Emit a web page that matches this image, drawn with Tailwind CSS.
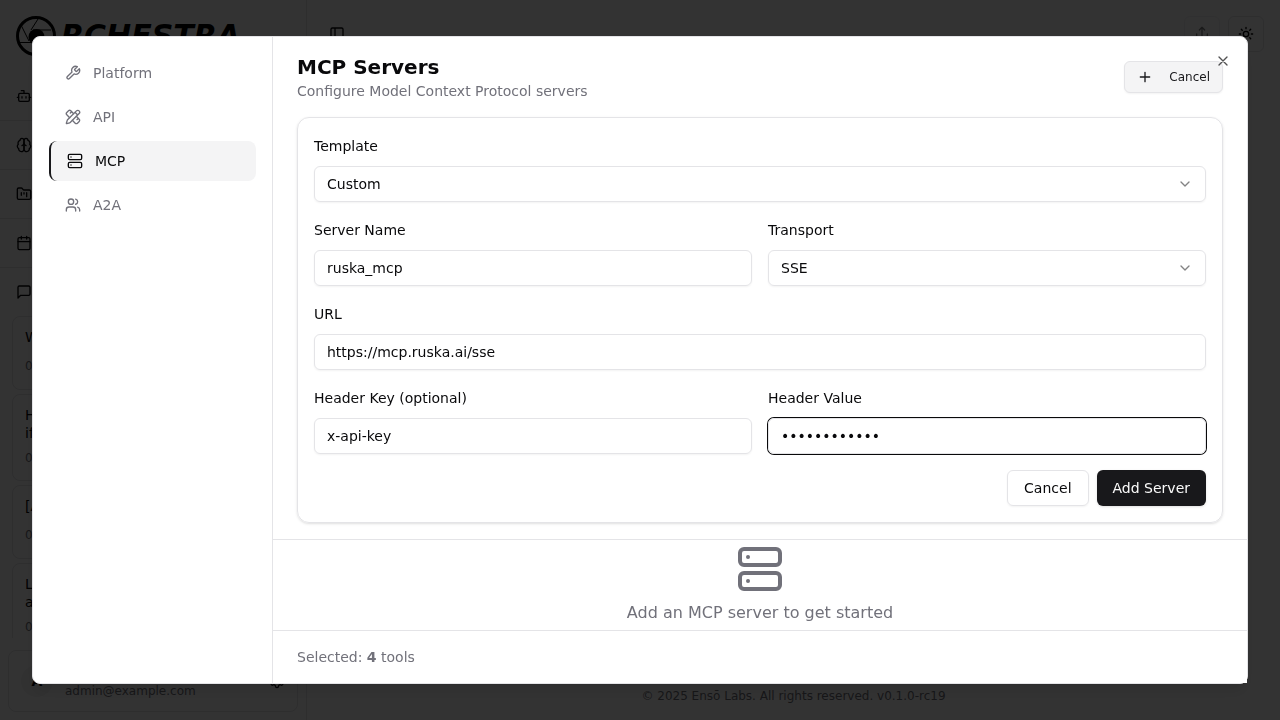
<!DOCTYPE html>
<html lang="en">
<head>
  <meta charset="UTF-8">
  <meta name="viewport" content="width=device-width, initial-scale=1.0">
  <title>Orchestra</title>
  <script src="https://cdn.jsdelivr.net/npm/@tailwindcss/browser@4"></script>
</head>
<body class="h-screen overflow-hidden bg-white font-['DejaVu_Sans',sans-serif] text-[#09090b]">

  <!-- App -->
  <div class="flex h-screen">
    <aside class="flex w-[307px] shrink-0 flex-col border-r border-[#e4e4e7]">
      <div class="flex h-18 shrink-0 items-center gap-[5px] pl-4">
        <svg class="size-10" viewBox="0 0 40 40" fill="none" stroke="black">
          <circle cx="20" cy="20" r="18.5" stroke-width="3"/>
          <path d="M22 3 15 14M17 14h18M5 9l8 16M4 26.500h18M29 33l-8-13" stroke-width="1"/>
          <circle cx="20.500" cy="21" r="8" fill="black" stroke="none"/>
        </svg>
        <span class="text-3xl font-bold italic text-black">RCHESTRA</span>
      </div>
      <nav class="shrink-0">
        <div class="flex h-[49px] items-center border-b border-[#e4e4e7] px-4">
          <svg class="size-4" viewBox="0 0 24 24" fill="none" stroke="currentColor" stroke-width="2" stroke-linecap="round" stroke-linejoin="round"><path d="M12 8V4H8"/><rect width="16" height="12" x="4" y="8" rx="2"/><path d="M2 14h2M20 14h2M15 13v2M9 13v2"/></svg>
        </div>
        <div class="flex h-[49px] items-center border-b border-[#e4e4e7] px-4">
          <svg class="size-4" viewBox="0 0 24 24" fill="none" stroke="currentColor" stroke-width="2" stroke-linecap="round" stroke-linejoin="round"><path d="M12 5a3 3 0 1 0-5.997.125 4 4 0 0 0-2.526 5.770 4 4 0 0 0 .556 6.588A4 4 0 1 0 12 18Z"/><path d="M12 5a3 3 0 1 1 5.997.125 4 4 0 0 1 2.526 5.770 4 4 0 0 1-.556 6.588A4 4 0 1 1 12 18Z"/><path d="M15 13a4.500 4.500 0 0 1-3-4 4.500 4.500 0 0 1-3 4"/></svg>
        </div>
        <div class="flex h-[49px] items-center border-b border-[#e4e4e7] px-4">
          <svg class="size-4" viewBox="0 0 24 24" fill="none" stroke="currentColor" stroke-width="2" stroke-linecap="round" stroke-linejoin="round"><path d="M4 20h16a2 2 0 0 0 2-2V8a2 2 0 0 0-2-2h-7.930a2 2 0 0 1-1.660-.9l-.820-1.200A2 2 0 0 0 7.930 3H4a2 2 0 0 0-2 2v13c0 1.100.9 2 2 2Z"/><path d="M8 10v4M12 10v2M16 10v6"/></svg>
        </div>
        <div class="flex h-[49px] items-center border-b border-[#e4e4e7] px-4">
          <svg class="size-4" viewBox="0 0 24 24" fill="none" stroke="currentColor" stroke-width="2" stroke-linecap="round" stroke-linejoin="round"><path d="M8 2v4M16 2v4"/><rect width="18" height="18" x="3" y="4" rx="2"/><path d="M3 10h18"/></svg>
        </div>
        <div class="flex h-12 items-center px-4">
          <svg class="size-4" viewBox="0 0 24 24" fill="none" stroke="currentColor" stroke-width="2" stroke-linecap="round" stroke-linejoin="round"><path d="M21 15a2 2 0 0 1-2 2H7l-4 4V5a2 2 0 0 1 2-2h14a2 2 0 0 1 2 2z"/></svg>
        </div>
      </nav>
      <div class="flex min-h-0 flex-1 flex-col gap-1 overflow-hidden px-3 text-sm leading-[18px]">
        <div class="h-[74px] shrink-0 rounded-lg border border-[#e4e4e7] px-3 pt-[11px]">
          <p>What tools do you have</p>
          <p class="mt-3 text-xs text-[#71717a]">08/14/2025</p>
        </div>
        <div class="h-[87px] shrink-0 rounded-lg border border-[#e4e4e7] px-3 pt-[11px]">
          <p>How can I check</p>
          <p>if a server is up</p>
          <p class="mt-2 text-xs text-[#71717a]">08/14/2025</p>
        </div>
        <div class="h-[74px] shrink-0 rounded-lg border border-[#e4e4e7] px-3 pt-[11px]">
          <p>[Agent] Daily report</p>
          <p class="mt-3 text-xs text-[#71717a]">08/13/2025</p>
        </div>
        <div class="h-[87px] shrink-0 rounded-lg border border-[#e4e4e7] px-3 pt-[11px]">
          <p>List all of the</p>
          <p>available tools</p>
          <p class="mt-2 text-xs text-[#71717a]">08/13/2025</p>
        </div>
      </div>
      <div class="mx-2 mt-3 mb-2 flex h-[62px] shrink-0 items-center rounded-lg border border-[#e4e4e7] px-3">
        <div class="flex size-8 items-center justify-center rounded-full bg-[#f4f4f5] text-sm font-bold">A</div>
        <div class="ml-3 flex-1 text-xs leading-5">
          <p class="font-bold">admin</p>
          <p class="text-[#71717a]">admin@example.com</p>
        </div>
        <svg class="size-4" viewBox="0 0 24 24" fill="none" stroke="currentColor" stroke-width="2"><path d="M12.220 2h-.440a2 2 0 0 0-2 2v.180a2 2 0 0 1-1 1.730l-.430.250a2 2 0 0 1-2 0l-.150-.080a2 2 0 0 0-2.730.730l-.220.380a2 2 0 0 0 .730 2.730l.150.100a2 2 0 0 1 1 1.720v.510a2 2 0 0 1-1 1.740l-.150.090a2 2 0 0 0-.730 2.730l.220.380a2 2 0 0 0 2.730.730l.150-.080a2 2 0 0 1 2 0l.430.250a2 2 0 0 1 1 1.730V20a2 2 0 0 0 2 2h.440a2 2 0 0 0 2-2v-.180a2 2 0 0 1 1-1.730l.430-.250a2 2 0 0 1 2 0l.150.080a2 2 0 0 0 2.730-.730l.220-.390a2 2 0 0 0-.730-2.730l-.150-.080a2 2 0 0 1-1-1.740v-.500a2 2 0 0 1 1-1.740l.150-.090a2 2 0 0 0 .730-2.730l-.220-.380a2 2 0 0 0-2.730-.730l-.150.080a2 2 0 0 1-2 0l-.430-.250a2 2 0 0 1-1-1.730V4a2 2 0 0 0-2-2z"/><circle cx="12" cy="12" r="3"/></svg>
      </div>
    </aside>
    <main class="flex flex-1 flex-col justify-between">
      <header class="flex h-[68px] items-center px-4">
        <div class="flex size-7 items-center justify-center">
          <svg class="size-4" viewBox="0 0 24 24" fill="none" stroke="currentColor" stroke-width="2"><rect width="18" height="18" x="3" y="3" rx="2"/><path d="M9 3v18"/></svg>
        </div>
        <div class="ml-auto flex gap-2">
          <button class="flex size-9 items-center justify-center rounded-md border border-[#e4e4e7] opacity-50">
            <svg class="size-4" viewBox="0 0 24 24" fill="none" stroke="currentColor" stroke-width="2" stroke-linecap="round" stroke-linejoin="round"><path d="M4 12v8a2 2 0 0 0 2 2h12a2 2 0 0 0 2-2v-8M16 6l-4-4-4 4M12 2v13"/></svg>
          </button>
          <button class="flex size-9 items-center justify-center rounded-md border border-[#e4e4e7]">
            <svg class="size-4" viewBox="0 0 24 24" fill="none" stroke="black" stroke-width="2" stroke-linecap="round" stroke-linejoin="round"><circle cx="12" cy="12" r="4"/><path d="M12 2v2M12 20v2m-7.070-17.070 1.410 1.410m11.320 11.320 1.410 1.410M2 12h2M20 12h2M6.340 17.660l-1.410 1.410M19.070 4.930l-1.410 1.410"/></svg>
          </button>
        </div>
      </header>
      <footer class="pb-4 text-center text-xs text-[#71717a]">© 2025 Ensō Labs. All rights reserved. v0.1.0-rc19</footer>
    </main>
  </div>

  <!-- Settings dialog -->
  <div class="fixed inset-0 z-50 flex items-center justify-center bg-black/80">
    <div class="relative flex h-[648px] w-[1216px] rounded-lg border border-[#e4e4e7] bg-white shadow-lg">
      <nav class="flex w-60 shrink-0 flex-col gap-1 border-r border-[#e4e4e7] p-4 text-sm text-[#71717a]">
        <a class="flex h-10 items-center gap-3 rounded-lg px-4">
          <svg class="size-4" viewBox="0 0 24 24" fill="none" stroke="currentColor" stroke-width="2" stroke-linecap="round" stroke-linejoin="round"><path d="M14.700 6.300a1 1 0 0 0 0 1.400l1.600 1.600a1 1 0 0 0 1.400 0l3.770-3.770a6 6 0 0 1-7.940 7.940l-6.910 6.910a2.120 2.120 0 0 1-3-3l6.910-6.910a6 6 0 0 1 7.940-7.940l-3.760 3.760z"/></svg>
          Platform
        </a>
        <a class="flex h-10 items-center gap-3 rounded-lg px-4">
          <svg class="size-4" viewBox="0 0 24 24" fill="none" stroke="currentColor" stroke-width="2" stroke-linecap="round" stroke-linejoin="round"><path d="M13 7 8.700 2.700a2.410 2.410 0 0 0-3.400 0L2.700 5.300a2.410 2.410 0 0 0 0 3.400L7 13M8 6l2-2M18 16l2-2M17 11l4.300 4.300c.940.940.940 2.460 0 3.400l-2.600 2.600c-.940.940-2.460.940-3.400 0L11 17"/><path d="M21.174 6.812a1 1 0 0 0-3.986-3.987L3.842 16.174a2 2 0 0 0-.5.830l-1.321 4.352a.5.5 0 0 0 .623.622l4.353-1.320a2 2 0 0 0 .830-.497zM15 5l4 4"/></svg>
          API
        </a>
        <a class="flex h-10 items-center gap-3 rounded-lg border-l-2 border-[#18181b] bg-[#f4f4f5] px-4 text-[#09090b]">
          <svg class="size-4" viewBox="0 0 24 24" fill="none" stroke="currentColor" stroke-width="2" stroke-linecap="round" stroke-linejoin="round"><rect width="20" height="8" x="2" y="2" rx="2"/><rect width="20" height="8" x="2" y="14" rx="2"/><path d="M6 6h.01M6 18h.01"/></svg>
          MCP
        </a>
        <a class="flex h-10 items-center gap-3 rounded-lg px-4">
          <svg class="size-4" viewBox="0 0 24 24" fill="none" stroke="currentColor" stroke-width="2" stroke-linecap="round" stroke-linejoin="round"><path d="M16 21v-2a4 4 0 0 0-4-4H6a4 4 0 0 0-4 4v2"/><circle cx="9" cy="7" r="4"/><path d="M22 21v-2a4 4 0 0 0-3-3.870M16 3.130a4 4 0 0 1 0 7.750"/></svg>
          A2A
        </a>
      </nav>

      <div class="flex min-w-0 flex-1 flex-col">
        <div class="px-6 py-4">
          <div class="flex items-center justify-between pb-4">
            <div>
              <h2 class="text-xl font-semibold">MCP Servers</h2>
              <p class="text-sm text-[#71717a]">Configure Model Context Protocol servers</p>
            </div>
            <button class="flex h-8 items-center gap-4 rounded-md border border-[#e4e4e7] bg-[#f4f4f5] px-3 text-xs text-[#18181b] shadow-xs">
              <svg class="size-4" viewBox="0 0 24 24" fill="none" stroke="currentColor" stroke-width="2" stroke-linecap="round"><path d="M5 12h14M12 5v14"/></svg>
              Cancel
            </button>
          </div>

          <form class="flex flex-col gap-4 rounded-xl border border-[#e4e4e7] p-4 text-sm shadow-sm">
            <div>
              <label class="mb-2 block leading-6">Template</label>
              <button type="button" class="flex h-9 w-full items-center justify-between rounded-md border border-[#e4e4e7] px-3 shadow-xs">
                Custom
                <svg class="size-4 opacity-50" viewBox="0 0 24 24" fill="none" stroke="currentColor" stroke-width="2" stroke-linecap="round" stroke-linejoin="round"><path d="m6 9 6 6 6-6"/></svg>
              </button>
            </div>
            <div class="grid grid-cols-2 gap-4">
              <div>
                <label class="mb-2 block leading-6">Server Name</label>
                <input type="text" value="ruska_mcp" class="h-9 w-full rounded-md border border-[#e4e4e7] px-3 shadow-xs">
              </div>
              <div>
                <label class="mb-2 block leading-6">Transport</label>
                <button type="button" class="flex h-9 w-full items-center justify-between rounded-md border border-[#e4e4e7] px-3 shadow-xs">
                  SSE
                  <svg class="size-4 opacity-50" viewBox="0 0 24 24" fill="none" stroke="currentColor" stroke-width="2" stroke-linecap="round" stroke-linejoin="round"><path d="m6 9 6 6 6-6"/></svg>
                </button>
              </div>
            </div>
            <div>
              <label class="mb-2 block leading-6">URL</label>
              <input type="text" value="https://mcp.ruska.ai/sse" class="h-9 w-full rounded-md border border-[#e4e4e7] px-3 shadow-xs">
            </div>
            <div class="grid grid-cols-2 gap-4">
              <div>
                <label class="mb-2 block leading-6">Header Key (optional)</label>
                <input type="text" value="x-api-key" class="h-9 w-full rounded-md border border-[#e4e4e7] px-3 shadow-xs">
              </div>
              <div>
                <label class="mb-2 block leading-6">Header Value</label>
                <input type="password" value="sk-12345abcd" class="h-9 w-full rounded-md border border-[#e4e4e7] px-3 ring-1 ring-[#09090b]">
              </div>
            </div>
            <div class="flex justify-end gap-2">
              <button type="button" class="h-9 rounded-md border border-[#e4e4e7] px-4 shadow-xs">Cancel</button>
              <button type="button" class="h-9 rounded-md bg-[#18181b] px-4 text-[#fafafa] shadow-sm">Add Server</button>
            </div>
          </form>
        </div>

        <div class="flex min-h-0 flex-1 flex-col items-center justify-center gap-2 border-t border-[#e4e4e7] text-[#71717a]">
          <svg class="size-12 shrink-0" viewBox="0 0 24 24" fill="none" stroke="currentColor" stroke-width="2" stroke-linecap="round" stroke-linejoin="round"><rect width="20" height="8" x="2" y="2" rx="2"/><rect width="20" height="8" x="2" y="14" rx="2"/><path d="M6 6h.01M6 18h.01"/></svg>
          <p>Add an MCP server to get started</p>
        </div>

        <div class="border-t border-[#e4e4e7] bg-white px-6 py-4 text-sm text-[#71717a]">
          Selected: <span class="font-bold">4</span> tools
        </div>
      </div>

      <button class="absolute top-4 right-4 opacity-70">
        <svg class="size-4" viewBox="0 0 24 24" fill="none" stroke="currentColor" stroke-width="2" stroke-linecap="round"><path d="M18 6 6 18M6 6l12 12"/></svg>
      </button>
    </div>
  </div>

</body>
</html>
